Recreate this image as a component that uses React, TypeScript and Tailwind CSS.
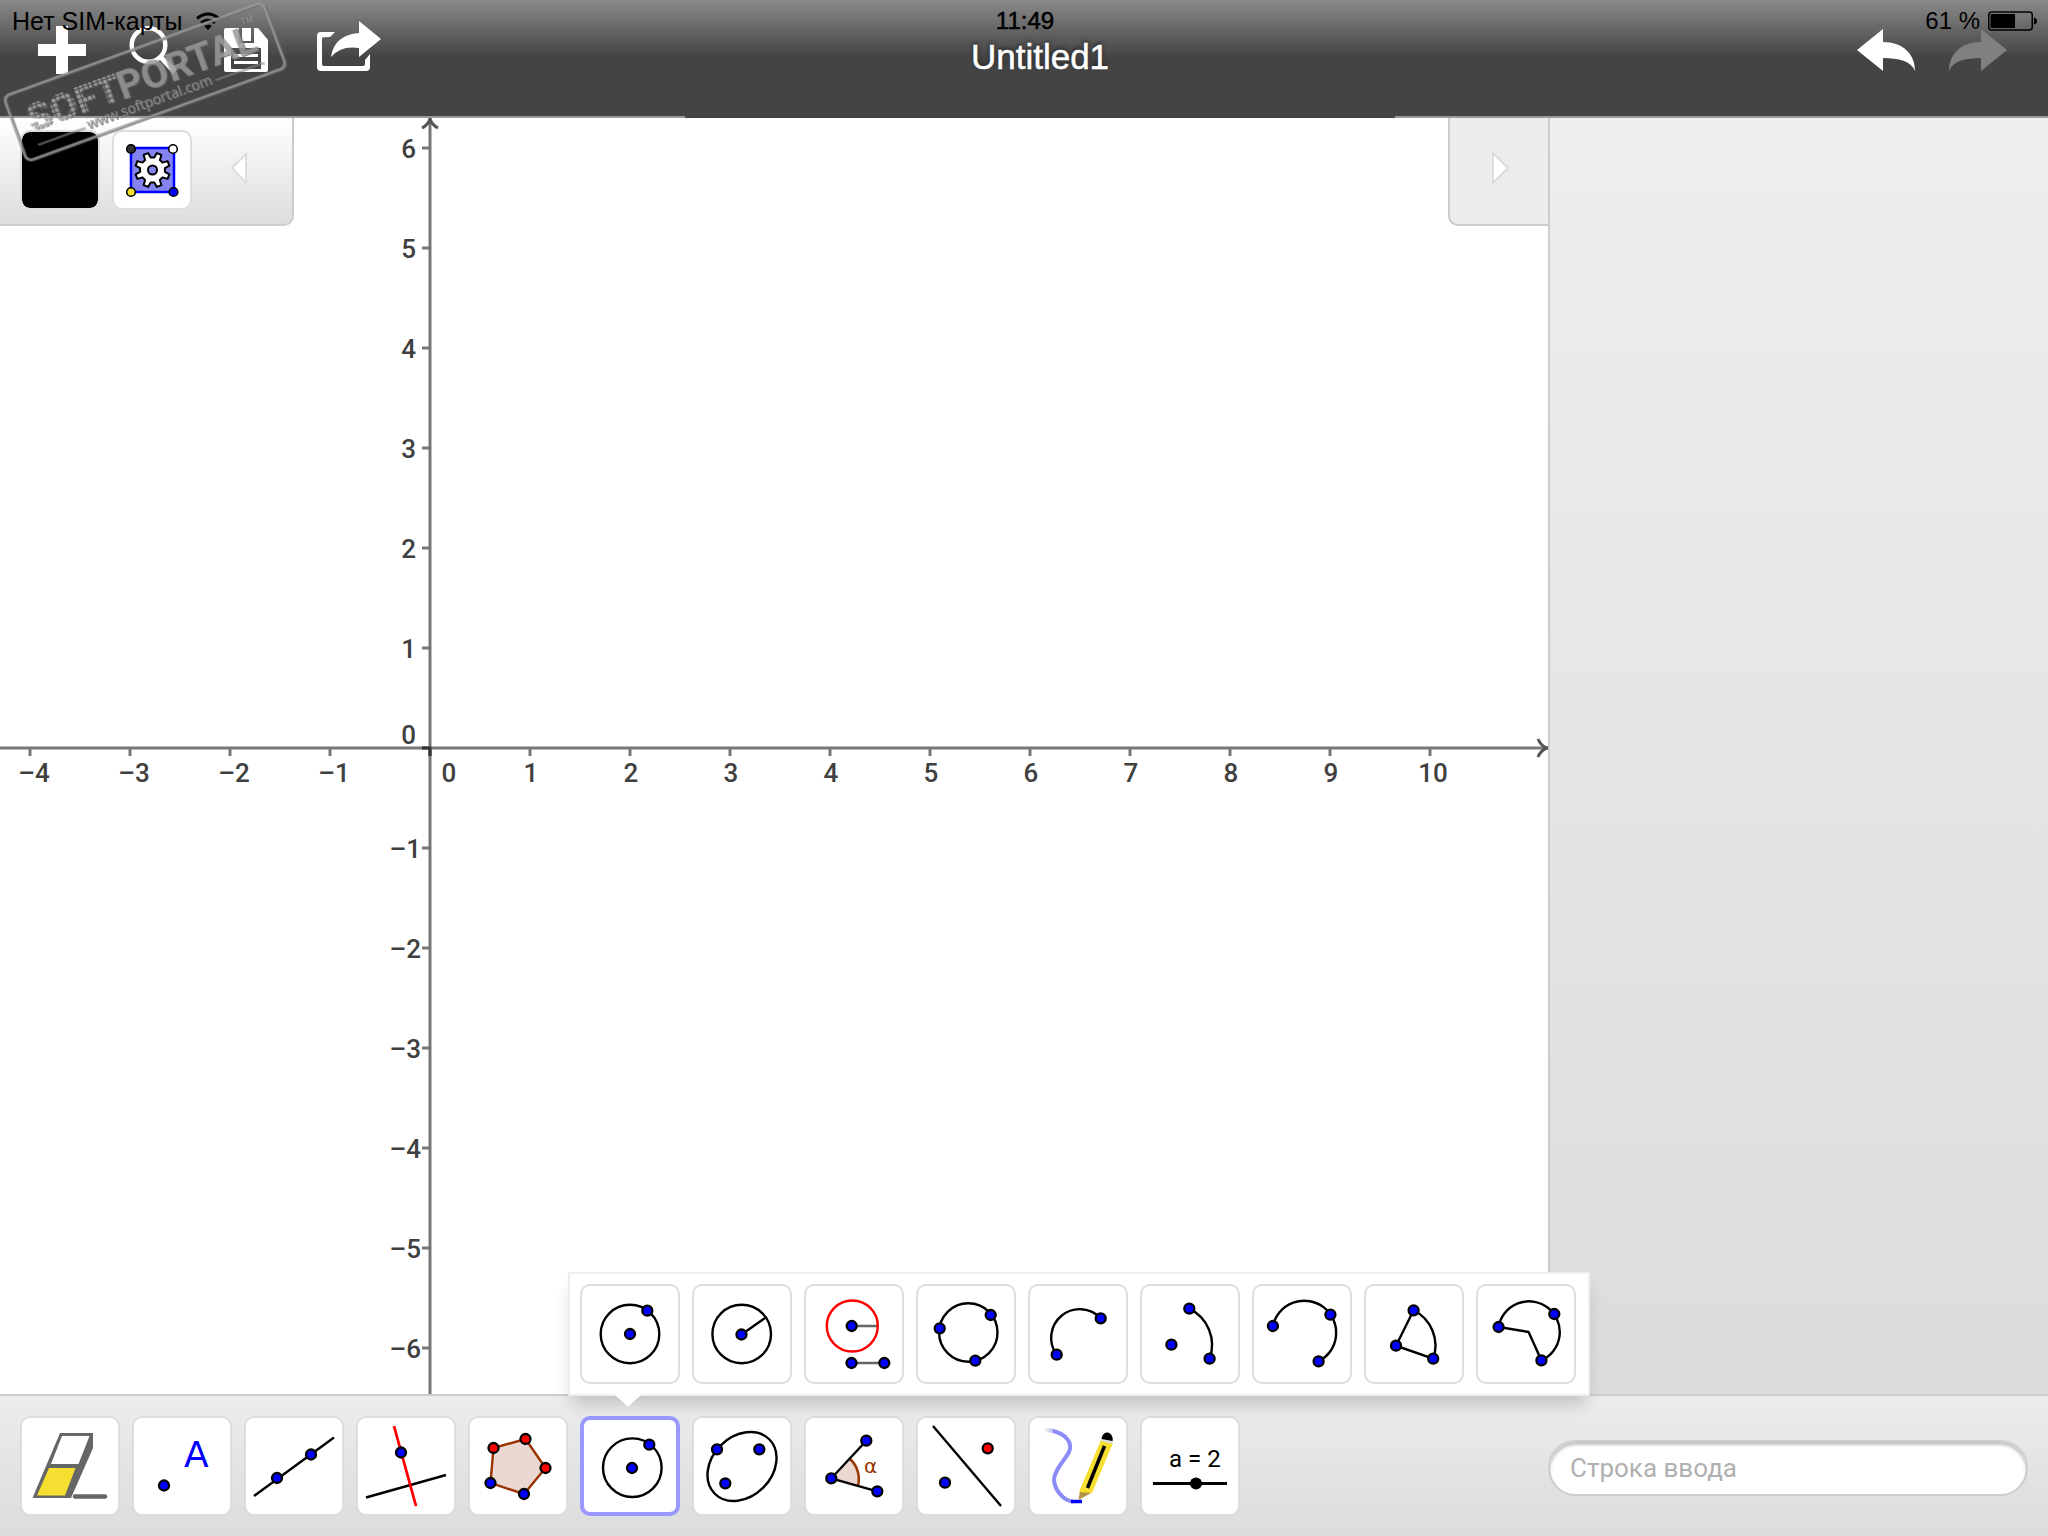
import React from "react";

type Children = { children?: React.ReactNode };

const BLUE = "#0000ff";
const RED = "#ff0000";
const BROWN = "#993300";

function Dot({ x, y, c = BLUE }: { x: number; y: number; c?: string }) {
  return <circle cx={x} cy={y} r={5} fill={c} stroke="#000" strokeWidth={2.3} />;
}

/* Square drawing surface of a tool; the strip of tools shares one coordinate system. */
function ToolArt({ box, children }: Children & { box: string }) {
  return (
    <svg viewBox={box} className="h-24 w-24 shrink-0" fill="none" stroke="#000" strokeWidth={2.4} aria-hidden="true">
      {children}
    </svg>
  );
}

function ToolButton({ label, selected, children }: Children & { label: string; selected?: boolean }) {
  return (
    <button
      type="button"
      aria-label={label}
      aria-pressed={!!selected}
      className={
        selected
          ? "flex h-[100px] w-[100px] shrink-0 items-center justify-center rounded-[10px] border-4 border-[#9999ff] bg-white"
          : "flex h-[100px] w-[100px] shrink-0 items-center justify-center rounded-[10px] border-2 border-[#dddddd] bg-white"
      }
    >
      {children}
    </button>
  );
}

const mainTools = [
  {
    label: "Eraser",
    art: (
      <ToolArt box="22 1418 96 96">
        <path d="M60 1433H93V1448L71 1498H32.5Z" fill="#666" stroke="none" />
        <path d="M62 1436H89.5L78.5 1464H51Z" fill="#fff" stroke="none" />
        <path d="M49 1468H75.5L65 1495.500H37Z" fill="#f6df30" stroke="none" />
        <path d="M75 1496.500H105" stroke="#666" strokeWidth={4.5} strokeLinecap="round" />
      </ToolArt>
    ),
  },
  {
    label: "Point",
    art: (
      <ToolArt box="134 1418 96 96">
        <Dot x={164} y={1485.5} />
        <text x={184} y={1467} fill={BLUE} stroke="none" className="font-['DejaVu_Sans',sans-serif] text-[36px]">A</text>
      </ToolArt>
    ),
  },
  {
    label: "Line",
    art: (
      <ToolArt box="246 1418 96 96">
        <path d="M254 1496L334 1437.500" />
        <Dot x={277} y={1478} />
        <Dot x={311} y={1454.5} />
      </ToolArt>
    ),
  },
  {
    label: "Perpendicular line",
    art: (
      <ToolArt box="358 1418 96 96">
        <path d="M366 1497.500L446 1475" />
        <path d="M394 1426L416 1506" stroke={RED} strokeWidth={2.8} />
        <Dot x={401} y={1452.5} />
      </ToolArt>
    ),
  },
  {
    label: "Polygon",
    art: (
      <ToolArt box="470 1418 96 96">
        <path d="M493.500 1448L525.500 1439L545.500 1468L524 1494L490.500 1483Z" fill="#ecd8d2" stroke={BROWN} />
        <Dot x={493.5} y={1448} c={RED} />
        <Dot x={525.5} y={1439} c={RED} />
        <Dot x={545.5} y={1468} c={RED} />
        <Dot x={524} y={1494} />
        <Dot x={490.5} y={1483} />
      </ToolArt>
    ),
  },
  {
    label: "Circle",
    selected: true,
    art: (
      <ToolArt box="582 1418 96 96">
        <circle cx={632.3} cy={1467.7} r={29.3} />
        <Dot x={632} y={1468} />
        <Dot x={649.3} y={1444.7} />
      </ToolArt>
    ),
  },
  {
    label: "Ellipse",
    art: (
      <ToolArt box="694 1418 96 96">
        <ellipse cx={742} cy={1466.5} rx={38.5} ry={30} transform="rotate(-45 742 1466.500)" />
        <Dot x={717} y={1449.3} />
        <Dot x={759.3} y={1449.3} />
        <Dot x={725.3} y={1483.3} />
      </ToolArt>
    ),
  },
  {
    label: "Angle",
    art: (
      <ToolArt box="806 1418 96 96">
        <path d="M831.300 1478.300L850 1459A27 27 0 0 1 858 1485.500Z" fill="#ecd8d2" stroke="none" />
        <path d="M850 1459A27 27 0 0 1 858 1485.500" stroke={BROWN} strokeWidth={2.5} />
        <path d="M866.300 1440.700L831.300 1478.300L877.300 1491.300" />
        <Dot x={831.3} y={1478.3} />
        <Dot x={866.3} y={1440.7} />
        <Dot x={877.3} y={1491.3} />
        <text x={864} y={1472.5} fill={BROWN} stroke="none" className="font-['DejaVu_Sans',sans-serif] text-[20px]">α</text>
      </ToolArt>
    ),
  },
  {
    label: "Reflection",
    art: (
      <ToolArt box="918 1418 96 96">
        <path d="M933 1426L1001 1506" />
        <Dot x={987.7} y={1448.3} c={RED} />
        <Dot x={945} y={1482.7} />
      </ToolArt>
    ),
  },
  {
    label: "Pen",
    art: (
      <ToolArt box="1030 1418 96 96">
        <defs>
          <linearGradient id="ink" gradientUnits="userSpaceOnUse" x1="1044" y1="0" x2="1056" y2="0">
            <stop offset="0" stopColor="#ddd" stopOpacity={0.3} />
            <stop offset="1" stopColor="#9090fa" />
          </linearGradient>
        </defs>
        <path d="M1044 1430.500Q1050 1430 1054 1431" stroke="url(#ink)" strokeWidth={4} />
        <path d="M1053 1431C1066 1434 1073 1443 1069 1452C1065 1460 1054 1470 1054 1480C1055 1491 1064 1501 1073 1501.500" stroke="#8c8cf9" strokeWidth={4} />
        <path d="M1071 1501.500H1082" stroke={BLUE} strokeWidth={3.5} />
        <path d="M1080 1490.500L1078.500 1500L1092 1492.500Z" fill="#b59248" stroke="none" />
        <path d="M1101 1440L1113 1443L1092 1493L1079 1492Z" fill="#f6df30" stroke="none" />
        <path d="M1101 1441L1102 1437L1113 1440L1112.500 1444Z" fill="#ddd" stroke="none" />
        <path d="M1101.500 1439C1102 1434 1105 1432.500 1107.500 1432.500C1111 1433 1113.500 1437 1112.500 1441Z" fill="#000" stroke="none" />
        <path d="M1104.500 1446L1087.500 1488" strokeWidth={3.5} />
      </ToolArt>
    ),
  },
  {
    label: "Slider",
    art: (
      <ToolArt box="1142 1418 96 96">
        <text x={1169} y={1467} fill="#000" stroke="none" className="font-['Roboto',sans-serif] text-[24px]">a = 2</text>
        <path d="M1153 1483.500H1227" strokeWidth={3} />
        <circle cx={1196} cy={1483.5} r={6} fill="#000" stroke="none" />
      </ToolArt>
    ),
  },
];

const circleTools = [
  {
    label: "Circle with centre through point",
    art: (
      <ToolArt box="582 1286 96 96">
        <circle cx={630} cy={1334} r={29.3} />
        <Dot x={630} y={1334} />
        <Dot x={647.3} y={1310.7} />
      </ToolArt>
    ),
  },
  {
    label: "Circle with centre and radius",
    art: (
      <ToolArt box="694 1286 96 96">
        <circle cx={741.7} cy={1334} r={29.3} />
        <path d="M741.500 1334.500L765 1318" />
        <Dot x={741.5} y={1334.5} />
      </ToolArt>
    ),
  },
  {
    label: "Compass",
    art: (
      <ToolArt box="806 1286 96 96">
        <path d="M852 1326H877M852 1363H884" stroke="#666" strokeWidth={2.5} />
        <circle cx={852.3} cy={1326} r={25.5} stroke={RED} />
        <Dot x={851.7} y={1326} />
        <Dot x={851.5} y={1363} />
        <Dot x={884.3} y={1363} />
      </ToolArt>
    ),
  },
  {
    label: "Circle through three points",
    art: (
      <ToolArt box="918 1286 96 96">
        <circle cx={968.3} cy={1332.5} r={29.2} />
        <Dot x={939.7} y={1328.3} />
        <Dot x={990.7} y={1315} />
        <Dot x={975.3} y={1360.7} />
      </ToolArt>
    ),
  },
  {
    label: "Semicircle",
    art: (
      <ToolArt box="1030 1286 96 96">
        <path d="M1056.700 1354.700A28.600 28.600 0 0 1 1100.700 1318.300" />
        <Dot x={1056.7} y={1354.7} />
        <Dot x={1100.7} y={1318.3} />
      </ToolArt>
    ),
  },
  {
    label: "Circular arc",
    art: (
      <ToolArt box="1142 1286 96 96">
        <path d="M1189.300 1308.700A40.300 40.300 0 0 1 1209.600 1358.700" />
        <Dot x={1189.3} y={1308.7} />
        <Dot x={1209.6} y={1358.7} />
        <Dot x={1171.4} y={1344.7} />
      </ToolArt>
    ),
  },
  {
    label: "Circumcircular arc",
    art: (
      <ToolArt box="1254 1286 96 96">
        <path d="M1272.900 1326A32 32 0 1 1 1318.600 1361.300" />
        <Dot x={1272.9} y={1326} />
        <Dot x={1330.4} y={1314.7} />
        <Dot x={1318.6} y={1361.3} />
      </ToolArt>
    ),
  },
  {
    label: "Circular sector",
    art: (
      <ToolArt box="1366 1286 96 96">
        <path d="M1396 1345.700L1413.600 1310.300A39.500 39.500 0 0 1 1433.200 1358.700Z" />
        <Dot x={1413.6} y={1310.3} />
        <Dot x={1396} y={1345.7} />
        <Dot x={1433.2} y={1358.7} />
      </ToolArt>
    ),
  },
  {
    label: "Circumcircular sector",
    art: (
      <ToolArt box="1478 1286 96 96">
        <path d="M1528.600 1332L1498.600 1327A30.800 30.800 0 1 1 1541.400 1360.300Z" />
        <Dot x={1498.6} y={1327} />
        <Dot x={1554.3} y={1314} />
        <Dot x={1541.4} y={1360.3} />
      </ToolArt>
    ),
  },
];

function HeaderButton({ label, box, children }: Children & { label: string; box: string }) {
  return (
    <button type="button" aria-label={label} className="h-24 w-24 shrink-0">
      <svg viewBox={box} className="h-24 w-24" fill="#fff" aria-hidden="true">
        {children}
      </svg>
    </button>
  );
}

function StatusBar() {
  return (
    <div className="z-10 col-start-1 row-start-1 grid h-[42px] grid-cols-3 items-center self-start pr-2.5 pl-3 font-['Liberation_Sans',Arial,sans-serif] text-2xl text-black">
      <div className="flex items-center gap-3.5">
        <span className="text-[25px] leading-8">Нет SIM-карты</span>
        <svg viewBox="0 0 24 18" className="h-[18px] w-6" fill="none" stroke="#000" strokeWidth={3} aria-label="Wi-Fi">
          <path d="M1 6.500Q12 -2.500 23 6.500M5 11Q12 5.500 19 11" />
          <path d="M8 14Q12 11 16 14L12 18Z" fill="#000" stroke="none" />
        </svg>
      </div>
      <div className="text-center leading-7 [-webkit-text-stroke:0.5px_#000]">11:49</div>
      <div className="flex items-center justify-end gap-2">
        <span>61 %</span>
        <svg viewBox="0 0 50 20" className="h-5 w-[50px]" aria-label="Battery">
          <rect x={0.75} y={1} width={43.5} height={18} rx={3} fill="none" stroke="#000" strokeWidth={1.5} />
          <path d="M2.500 4Q2.500 3 3.500 3H27V17H3.500Q2.500 17 2.500 16Z" />
          <path d="M46 6.500Q49 7.500 49 10T46 13.500Z" />
        </svg>
      </div>
    </div>
  );
}

function Header() {
  return (
    <header className="relative grid shrink-0 bg-[linear-gradient(#8a8a8a_0px,#444444_57px)]">
      <StatusBar />
      <div className="col-start-1 row-start-1 flex h-[118px] border-b-2 border-[#999999]">
        <nav aria-label="File" className="flex w-[400px] shrink-0 items-start pl-4">
          <HeaderButton label="New" box="16 0 96 96">
            <path d="M56 26H68V44H86V56H68V74H56V56H38V44H56Z" />
          </HeaderButton>
          <HeaderButton label="Open" box="112 0 96 96">
            <circle cx={148.5} cy={45} r={16.8} fill="none" stroke="#fff" strokeWidth={4.4} />
            <path d="M159 59L163 56L177 69L173 74Z" />
          </HeaderButton>
          <HeaderButton label="Save" box="208 0 96 96">
            <path fillRule="evenodd" d="M226 28H258L268 40V70Q268 72 266 72H226Q224 72 224 70V30Q224 28 226 28ZM239 28V43H254V28ZM231 48V69H261V48Z" />
            <path d="M242 28H251V41H242ZM234 54H258V57H234ZM234 61H258V64H234Z" />
          </HeaderButton>
          <HeaderButton label="Share" box="304 0 96 96">
            <path d="M335 32L330 37Q322 37 322 38V64Q322 66 324 66H363Q365 66 365 64V60L370 54V67Q370 71 366 71H321Q317 71 317 67V36Q317 32 321 32Z" />
            <path d="M359 21L381 39L359 57V48Q341 45 331 57Q334 35 359 33Z" />
          </HeaderButton>
        </nav>
        <div className="relative min-w-0 flex-1 pt-9 text-center">
          <h1 className="font-['Liberation_Sans',Arial,sans-serif] text-[35px] leading-[42px] text-white [-webkit-text-stroke:0.5px_#fff] [text-shadow:0_-2px_4px_#222]">
            Untitled1
          </h1>
          <div className="absolute top-full left-1/2 h-0.5 w-[710px] -translate-x-1/2 bg-[#444444]" />
        </div>
        <nav aria-label="History" className="flex w-[368px] shrink-0 items-start justify-end pr-4">
          <HeaderButton label="Undo" box="1840 0 96 96">
            <path d="M1857 50L1883 29V42C1903 42 1915 54 1915 71C1911 61 1899 58 1883 58V71Z" />
          </HeaderButton>
          <HeaderButton label="Redo" box="1936 0 96 96">
            <path d="M2007 50L1981 29V42C1961 42 1949 54 1949 71C1953 61 1965 58 1981 58V71Z" fill="#808080" />
          </HeaderButton>
        </nav>
      </div>
    </header>
  );
}

const ORIGIN = { x: 430, y: 630 };
const UNIT = 100;
const xs = [-4, -3, -2, -1, 0, 1, 2, 3, 4, 5, 6, 7, 8, 9, 10];
const ys = [6, 5, 4, 3, 2, 1, 0, -1, -2, -3, -4, -5, -6];
const fmt = (n: number) => (n < 0 ? "–" + -n : String(n));

function xLabelCentre(n: number) {
  if (n === 0) return ORIGIN.x + 19;
  const shift = n < 0 ? 4 : n > 9 ? 3 : 1;
  return ORIGIN.x + n * UNIT + shift;
}

function Graph() {
  return (
    <svg className="block h-full w-full" stroke="#777" strokeWidth={3} fill="none" role="img" aria-label="Coordinate plane">
      <line x1={0} y1={ORIGIN.y} x2="100%" y2={ORIGIN.y} />
      <line x1={ORIGIN.x} y1={0} x2={ORIGIN.x} y2="100%" />
      <path d="M422 10Q428 7 430 1Q432 7 438 10" stroke="#555" />
      <svg x="100%" overflow="visible">
        <path d="M-10 621Q-7 628 -1 630Q-7 632 -10 639" stroke="#555" />
      </svg>
      {xs.map((n) => (
        <line key={n} x1={ORIGIN.x + n * UNIT} x2={ORIGIN.x + n * UNIT} y1={ORIGIN.y} y2={ORIGIN.y + 8} />
      ))}
      {ys.map((n) => (
        <line key={n} x1={ORIGIN.x - 8} x2={ORIGIN.x} y1={ORIGIN.y - n * UNIT} y2={ORIGIN.y - n * UNIT} />
      ))}
      <path d="M422 630H431M430 629V638" stroke="#333" />
      <g fill="#404040" stroke="none" className="font-['Roboto',sans-serif] text-[26px] font-medium">
        {xs.map((n) => (
          <text key={n} x={xLabelCentre(n)} y={ORIGIN.y + 34} textAnchor="middle">{fmt(n)}</text>
        ))}
        {ys.map((n) => (
          <text key={n} x={n < 0 ? 421 : 416} y={n === 0 ? ORIGIN.y - 4 : ORIGIN.y - n * UNIT + 10} textAnchor="end">{fmt(n)}</text>
        ))}
      </g>
    </svg>
  );
}

function gearPath(cx: number, cy: number) {
  const pts: string[] = [];
  for (let i = 0; i < 8; i++) {
    const mid = 22.5 + i * 45;
    for (const [off, r] of [[-14, 12.5], [-8, 17.5], [8, 17.5], [14, 12.5]]) {
      const a = ((mid + off) * Math.PI) / 180;
      pts.push((cx + r * Math.cos(a)).toFixed(1) + " " + (cy + r * Math.sin(a)).toFixed(1));
    }
  }
  return "M" + pts.join("L") + "Z";
}

function StylePanel() {
  return (
    <div className="absolute top-0 left-0 flex h-[108px] w-[294px] items-start gap-3 rounded-br-[10px] border-r-2 border-b-2 border-[#cccccc] bg-linear-to-b from-white to-[#dddddd] pt-3 pl-5">
      <button type="button" aria-label="Colour" className="h-20 w-20 rounded-[10px] border-2 border-[#dddddd] bg-black bg-clip-padding" />
      <button type="button" aria-label="Object settings" className="h-20 w-20 rounded-[10px] border-2 border-[#dddddd] bg-white">
        <svg viewBox="114 132 76 76" className="h-[76px] w-[76px]" aria-hidden="true">
          <rect x={131} y={148} width={43} height={44} fill="#8484f0" stroke={BLUE} strokeWidth={2.5} />
          <path d={gearPath(152.5, 170)} fill="#fff" stroke="#000" strokeWidth={2} strokeLinejoin="round" />
          <circle cx={152.5} cy={170} r={4.5} fill="#8484f0" stroke="#000" strokeWidth={2} />
          <circle cx={131} cy={149} r={4.3} fill="#333" stroke="#000" strokeWidth={1.6} />
          <circle cx={173} cy={149} r={4.3} fill="#fff" stroke="#000" strokeWidth={1.6} />
          <circle cx={131} cy={192} r={4.3} fill="#f6df30" stroke="#000" strokeWidth={1.6} />
          <circle cx={173.5} cy={192} r={4.3} fill={BLUE} stroke="#000" strokeWidth={1.6} />
        </svg>
      </button>
      <button type="button" aria-label="Collapse style bar" className="h-20 w-20">
        <svg viewBox="0 0 80 80" className="h-20 w-20" aria-hidden="true">
          <path d="M28 38L42 24V53Z" fill="#fff" stroke="#dddddd" strokeWidth={2} />
        </svg>
      </button>
    </div>
  );
}

function Watermark() {
  return (
    <svg viewBox="0 0 300 170" className="pointer-events-none absolute top-0 left-0 z-20 h-[170px] w-[300px]" aria-hidden="true">
      <defs>
        <pattern id="dots" width="5" height="5" patternUnits="userSpaceOnUse">
          <rect width="3.7" height="3.7" fill="#a8a8a8" />
        </pattern>
      </defs>
      <g transform="translate(2 96) rotate(-20)" className="opacity-85 drop-shadow-[1px_1px_0px_#666]">
        <rect x={1} y={1} width={276} height={69} rx={6} fill="none" stroke="#999" strokeWidth={2.5} />
        <g fill="#999">
          <text x={16} y={45} fill="url(#dots)" className="font-['Roboto',sans-serif] text-[39px] font-black">SOFT</text>
          <text x={112} y={45} className="font-['Roboto',sans-serif] text-[39px] font-bold">PORTAL</text>
          <text x={70} y={61} className="font-['Noto_Sans',sans-serif] text-[14px]">www.softportal.com</text>
          <text x={250} y={16} className="font-['Noto_Sans',sans-serif] text-[9px]">TM</text>
        </g>
        <path d="M17 58H67M206 58H257" stroke="#999" strokeWidth={1} />
      </g>
    </svg>
  );
}

function ToolPopup() {
  return (
    <div className="absolute bottom-full -left-3 z-10 mb-5 flex gap-3 border-2 border-[#eeeeee] bg-white py-2.5 pr-3 pl-2.5 shadow-[0_12px_16px_-4px_rgba(0,0,0,0.18)]">
      {circleTools.map((t) => (
        <ToolButton key={t.label} label={t.label}>{t.art}</ToolButton>
      ))}
      <svg viewBox="0 0 28 13" className="absolute top-full left-11 h-[13px] w-7" aria-hidden="true">
        <path d="M0 0H28L14 13Z" fill="#fff" />
      </svg>
    </div>
  );
}

export default function App() {
  return (
    <div className="relative flex h-screen flex-col overflow-hidden bg-white">
      <Header />
      <main className="flex min-h-0 flex-1">
        <section className="relative min-w-0 flex-1">
          <Graph />
          <StylePanel />
          <button
            type="button"
            aria-label="Expand side panel"
            className="absolute top-0 right-0 h-[108px] w-[100px] rounded-bl-[10px] border-b-2 border-l-2 border-[#cccccc] bg-[#ececec]"
          >
            <svg viewBox="0 0 98 106" className="h-[106px] w-[98px]" aria-hidden="true">
              <path d="M43 35L58 50L43 65Z" fill="#fff" stroke="#dddddd" strokeWidth={2} />
            </svg>
          </button>
        </section>
        <aside className="w-[500px] shrink-0 border-l-2 border-[#cccccc] bg-linear-to-b from-[#eeeeee] to-[#dcdcdc]" />
      </main>
      <footer className="flex shrink-0 items-center justify-between border-t-2 border-[#cccccc] bg-linear-to-b from-[#ececec] to-[#dcdcdc] p-5">
        <div className="flex gap-3">
          {mainTools.map((t) => (
            <div key={t.label} className="relative">
              <ToolButton label={t.label} selected={t.selected}>{t.art}</ToolButton>
              {t.selected && <ToolPopup />}
            </div>
          ))}
        </div>
        <input
          type="text"
          aria-label="Строка ввода"
          placeholder="Строка ввода"
          className="mt-1 h-14 w-[480px] rounded-full border-2 border-[#cccccc] bg-white px-5 font-['Roboto',sans-serif] text-[26px] shadow-[inset_0_3px_3px_#c4c4c4] outline-none placeholder:text-[#b0b0b0]"
        />
      </footer>
      <Watermark />
    </div>
  );
}
